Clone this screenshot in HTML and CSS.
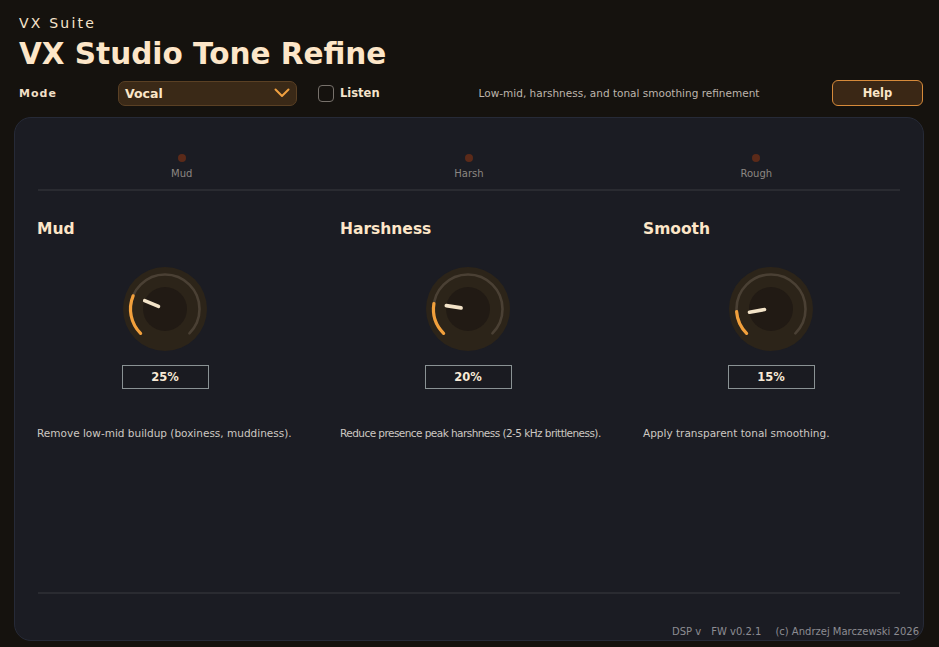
FILE: index.html
```html
<!DOCTYPE html>
<html>
<head>
<meta charset="utf-8">
<link rel="stylesheet" href="styles.css">
</head>
<body>
<header class="header">
  <div class="suite">VX Suite</div>
  <h1 class="title">VX Studio Tone Refine</h1>
  <div class="controls">
    <span class="mode-label">Mode</span>
    <div class="select">
      <span>Vocal</span>
      <svg class="chev" width="16" height="10" viewBox="0 0 16 10"><path d="M1.5 1.5 L8 8 L14.5 1.5" fill="none" stroke="#f0a040" stroke-width="2" stroke-linecap="round" stroke-linejoin="round"/></svg>
    </div>
    <label class="listen"><span class="check"></span>Listen</label>
    <span class="desc-top">Low-mid, harshness, and tonal smoothing refinement</span>
    <button class="help">Help</button>
  </div>
</header>
<main class="panel">
  <div class="leds">
    <div class="led-cell"><span class="led"></span><span class="led-label">Mud</span></div>
    <div class="led-cell"><span class="led"></span><span class="led-label">Harsh</span></div>
    <div class="led-cell"><span class="led"></span><span class="led-label">Rough</span></div>
  </div>
  <div class="sections">
    <section class="sec">
      <h2 class="sec-title">Mud</h2>
      <div class="knob-wrap">
        <svg class="knob" width="86" height="86" viewBox="0 0 86 86">
          <circle cx="43" cy="43" r="42" fill="#2c2419"/>
          <path d="M18.6 67.4 A34.5 34.5 0 1 1 67.4 67.4" fill="none" stroke="#4a4034" stroke-width="2.6" stroke-linecap="round"/>
          <circle cx="43" cy="43" r="22" fill="#211a14"/>
          <path d="M18.6 67.4 A34.5 34.5 0 0 1 11.13 29.8" fill="none" stroke="#f2a03c" stroke-width="3.2" stroke-linecap="round"/>
          <line x1="36.5" y1="40.3" x2="22.7" y2="34.6" stroke="#f3e3c8" stroke-width="3.6" stroke-linecap="round"/>
        </svg>
        <div class="value">25%</div>
      </div>
      <p class="sec-desc">Remove low-mid buildup (boxiness, muddiness).</p>
    </section>
    <section class="sec">
      <h2 class="sec-title">Harshness</h2>
      <div class="knob-wrap">
        <svg class="knob" width="86" height="86" viewBox="0 0 86 86">
          <circle cx="43" cy="43" r="42" fill="#2c2419"/>
          <path d="M18.6 67.4 A34.5 34.5 0 1 1 67.4 67.4" fill="none" stroke="#4a4034" stroke-width="2.6" stroke-linecap="round"/>
          <circle cx="43" cy="43" r="22" fill="#211a14"/>
          <path d="M18.6 67.4 A34.5 34.5 0 0 1 8.93 37.6" fill="none" stroke="#f2a03c" stroke-width="3.2" stroke-linecap="round"/>
          <line x1="36.1" y1="41.9" x2="21.3" y2="39.6" stroke="#f3e3c8" stroke-width="3.6" stroke-linecap="round"/>
        </svg>
        <div class="value">20%</div>
      </div>
      <p class="sec-desc tight">Reduce presence peak harshness (2-5 kHz brittleness).</p>
    </section>
    <section class="sec">
      <h2 class="sec-title">Smooth</h2>
      <div class="knob-wrap">
        <svg class="knob" width="86" height="86" viewBox="0 0 86 86">
          <circle cx="43" cy="43" r="42" fill="#2c2419"/>
          <path d="M18.6 67.4 A34.5 34.5 0 1 1 67.4 67.4" fill="none" stroke="#4a4034" stroke-width="2.6" stroke-linecap="round"/>
          <circle cx="43" cy="43" r="22" fill="#211a14"/>
          <path d="M18.6 67.4 A34.5 34.5 0 0 1 8.61 45.7" fill="none" stroke="#f2a03c" stroke-width="3.2" stroke-linecap="round"/>
          <line x1="36.5" y1="43.6" x2="21.5" y2="46.2" stroke="#f3e3c8" stroke-width="3.6" stroke-linecap="round"/>
        </svg>
        <div class="value">15%</div>
      </div>
      <p class="sec-desc">Apply transparent tonal smoothing.</p>
    </section>
  </div>
  <div class="footer">
    <span>DSP v</span><span>FW v0.2.1</span><span class="copy">(c) Andrzej Marczewski 2026</span>
  </div>
</main>
</body>
</html>
```
FILE: styles.css
```css
* { box-sizing: border-box; }
html, body { margin: 0; padding: 0; }
body {
  background: #15120e;
  width: 939px;
  height: 647px;
  overflow: hidden;
  font-family: "DejaVu Sans", Verdana, sans-serif;
  color: #fbe7cc;
}
.header {
  padding: 14px 16px 0 19px;
}
.suite {
  font-size: 14px;
  letter-spacing: 2.2px;
  line-height: 18px;
  color: #f5e4cc;
}
.title {
  margin: 4px 0 0;
  font-size: 29.5px;
  line-height: 36px;
  font-weight: bold;
  color: #fde6c8;
}
.controls {
  display: flex;
  align-items: center;
  height: 26px;
  margin-top: 8px;
}
.mode-label {
  width: 99px;
  font-size: 11px;
  font-weight: bold;
  letter-spacing: 1px;
  color: #f0dfc6;
}
.select {
  width: 179px;
  height: 25px;
  display: flex;
  align-items: center;
  justify-content: space-between;
  padding: 0 6px 0 6px;
  background: #3a2917;
  border: 1px solid #5a4024;
  border-radius: 7px;
  font-size: 12.5px;
  font-weight: bold;
  color: #fbe6c8;
}
.listen {
  display: flex;
  align-items: center;
  margin-left: 21px;
  font-size: 11.5px;
  font-weight: bold;
  color: #f4e4cc;
}
.check {
  width: 16px;
  height: 17px;
  border: 1.5px solid #77716b;
  border-radius: 4px;
  margin-right: 6px;
}
.desc-top {
  margin-left: 99px;
  font-size: 10.5px;
  color: #bdb5ac;
  flex: 1;
}
.help {
  width: 91px;
  height: 26px;
  background: #3a2715;
  border: 1px solid #d68a3a;
  border-radius: 6px;
  color: #fbe6c8;
  font-family: inherit;
  font-size: 11.5px;
  font-weight: bold;
  padding: 0;
}
.panel {
  margin: 11px 15px 0 14px;
  height: 524px;
  background: #1b1c23;
  border: 1px solid #262a37;
  border-radius: 17px;
  padding: 0 23px 0 23px;
  display: flex;
  flex-direction: column;
}
.leds {
  display: grid;
  grid-template-columns: 1fr 1fr 1fr;
  border-bottom: 2px solid #2a2b31;
  height: 73px;
  padding-top: 36px;
}
.led-cell {
  display: flex;
  flex-direction: column;
  align-items: center;
}
.led {
  width: 8px;
  height: 8px;
  border-radius: 50%;
  background: #5b2a19;
}
.led-label {
  margin-top: 6px;
  font-size: 10px;
  color: #8c8782;
}
.sections {
  flex: 1;
  display: grid;
  grid-template-columns: repeat(3, 257px);
  column-gap: 46px;
  padding-top: 28px;
  border-bottom: 2px solid #2a2b31;
}
.sec { margin-left: -1px; }
.sec-title {
  margin: 0;
  font-size: 15.5px;
  line-height: 20px;
  font-weight: bold;
  color: #fde6c8;
}
.knob-wrap {
  width: 256px;
  display: flex;
  flex-direction: column;
  align-items: center;
  margin-top: 27px;
}
.knob { display: block; }
.value {
  margin-top: 13px;
  width: 87px;
  height: 24px;
  border: 1px solid #8a9294;
  background: #1a1b21;
  display: flex;
  align-items: center;
  justify-content: center;
  font-size: 11.5px;
  font-weight: bold;
  color: #f8ead6;
}
.sec-desc {
  margin: 38px 0 0;
  font-size: 10.5px;
  white-space: nowrap;
  color: #cdc8c2;
}
.sec-desc.tight { letter-spacing: -0.55px; }
.footer {
  height: 46px;
  display: flex;
  justify-content: flex-end;
  align-items: flex-end;
  padding-bottom: 3px;
  margin-right: -19px;
  font-size: 10px;
  color: #8d8c92;
  gap: 10px;
}
.footer .copy { margin-left: 4px; }
```
